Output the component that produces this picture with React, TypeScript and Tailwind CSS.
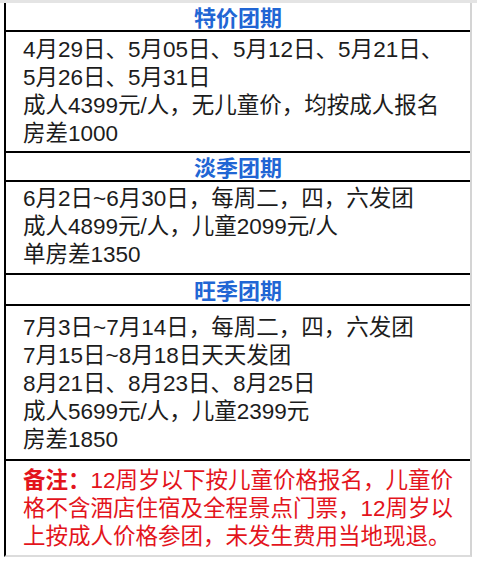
const sans = "font-['Liberation_Sans','Noto_Sans_CJK_SC',sans-serif]"

function Header({ title, tall }: { title: string; tall?: boolean }) {
  return (
    <div
      className={`${tall ? 'h-[31px]' : 'h-[29px]'} flex items-center justify-center border-b-2 border-black text-[22px] font-bold text-[#2166d4] font-['Noto_Sans_CJK_SC',serif]`}
    >
      {title}
    </div>
  )
}

function Body({ lines, className }: { lines: string[]; className: string }) {
  return (
    <div className={`border-b-2 border-black pl-[17px] text-[22.5px] leading-[28px] text-[#1c1c1c] ${className}`}>
      {lines.map((l, i) => (
        <div key={i} className="whitespace-nowrap">{l}</div>
      ))}
    </div>
  )
}

export default function App() {
  return (
    <div className={`w-[477px] h-[562px] bg-white ${sans} overflow-hidden`}>
      <div className="h-[3px] bg-[#e4e4e4]" />
      <div className="ml-[4px] w-[468px] border-l-2 border-black border-r-2 border-r-[#d4d4d4] border-b-2 border-b-[#dcdcdc]">
        <Header title="特价团期" />
        <Body
          className="pt-[4px] pb-[3px]"
          lines={[
            '4月29日、5月05日、5月12日、5月21日、',
            '5月26日、5月31日',
            '成人4399元/人，无儿童价，均按成人报名',
            '房差1000',
          ]}
        />
        <Header title="淡季团期" />
        <Body
          className="pt-[3px] pb-[4px]"
          lines={['6月2日~6月30日，每周二，四，六发团', '成人4899元/人，儿童2099元/人', '单房差1350']}
        />
        <Header title="旺季团期" tall />
        <Body
          className="pt-[8px] pb-[5px]"
          lines={[
            '7月3日~7月14日，每周二，四，六发团',
            '7月15日~8月18日天天发团',
            '8月21日、8月23日、8月25日',
            '成人5699元/人，儿童2399元',
            '房差1850',
          ]}
        />
        <div className="pl-[17px] pt-[6px] pb-[4px] text-[22.5px] leading-[28px] text-[#e3141c] whitespace-nowrap">
          <div>
            <span className="font-bold">备注：</span>12周岁以下按儿童价格报名，儿童价
          </div>
          <div>格不含酒店住宿及全程景点门票，12周岁以</div>
          <div>上按成人价格参团，未发生费用当地现退。</div>
        </div>
      </div>
    </div>
  )
}
